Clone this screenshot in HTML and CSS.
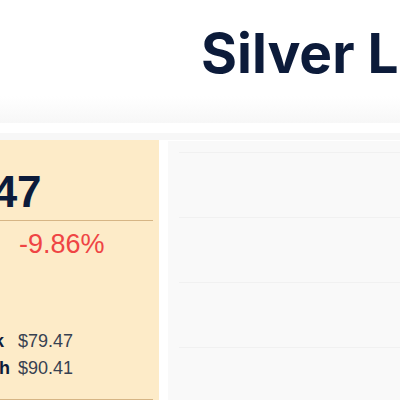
FILE: index.html
```html
<!DOCTYPE html>
<html>
<head>
<meta charset="utf-8">
<link rel="stylesheet" href="styles.css">
</head>
<body>
<header class="top">
  <h1 class="title">Silver Live Price</h1>
</header>
<div class="band"></div>
<main class="main">
  <section class="card">
    <div class="price">$81.47</div>
    <div class="rule"></div>
    <div class="change"><span class="chg-pct">-9.86%</span></div>
    <div class="stats">
      <div class="stat"><span class="stat-label">Prior week</span><span class="stat-val">$79.47</span></div>
      <div class="stat"><span class="stat-label">This month</span><span class="stat-val">$90.41</span></div>
    </div>
    <div class="rule rule-bottom"></div>
  </section>
  <section class="chart">
    <div class="grid-line"></div>
    <div class="grid-line"></div>
    <div class="grid-line"></div>
    <div class="grid-line"></div>
  </section>
</main>
</body>
</html>
```
FILE: styles.css
```css
html, body {
  margin: 0;
  padding: 0;
  background: #ffffff;
  overflow: hidden;
  width: 400px;
  height: 400px;
}
.top {
  height: 123px;
  background: linear-gradient(to bottom, #ffffff 0, #ffffff 96px, #f7f7f7 123px);
  display: flex;
  align-items: flex-start;
}
.title {
  margin: 0;
  padding: 20px 0 0 201px;
  font-family: Inter, "Noto Sans", sans-serif;
  font-weight: 700;
  font-size: 55px;
  line-height: 66px;
  color: #0c1b3a;
  white-space: nowrap;
}
.band {
  height: 7px;
  margin-top: 10px;
  background: #f7f7f7;
}
.main {
  display: flex;
  align-items: flex-start;
  gap: 9px;
}
.card {
  width: 159px;
  height: 270px;
  flex: none;
  background: #fdebc8;
  overflow: hidden;
  font-family: "Liberation Sans", Arial, sans-serif;
}
.price {
  margin: 27px 0 0 -93px;
  font-size: 44px;
  font-weight: 700;
  line-height: 50px;
  color: #0c1b3a;
  white-space: nowrap;
}
.rule {
  width: 153px;
  height: 1px;
  margin-top: 3px;
  background: #d6b585;
}
.change {
  padding-left: 19px;
  margin-top: 7px;
  font-size: 27px;
  line-height: 32px;
  color: #ef4444;
}
.stats {
  margin-top: 71px;
  margin-left: -87px;
  display: grid;
  row-gap: 6px;
}
.stat {
  display: grid;
  grid-template-columns: 105px auto;
  font-size: 18px;
  line-height: 21px;
  white-space: nowrap;
}
.stat-label {
  font-weight: 700;
  color: #0c1b3a;
}
.stat-val {
  color: #374151;
}
.rule-bottom {
  margin-top: 20px;
}
.chart {
  flex: 1;
  height: 260px;
  margin-top: 1px;
  background: #f9f9f9;
  padding: 11px 0 0 11px;
  display: flex;
  flex-direction: column;
  gap: 64px;
}
.grid-line {
  height: 1px;
  background: #f1f1f1;
}
```
